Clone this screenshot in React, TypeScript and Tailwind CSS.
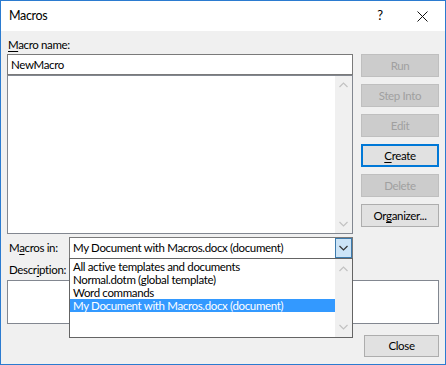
import React from "react";

const font = "font-['Lato',sans-serif] tracking-[-0.35px]";

function Btn({ label, disabled, primary }: { label: React.ReactNode; disabled?: boolean; primary?: boolean }) {
  const base = "h-[23px] w-full flex items-center justify-center text-[11.5px] leading-none";
  if (disabled)
    return <div className={`${base} bg-[#cccccc] border border-[#bfbfbf] text-[#a0a0a0]`}>{label}</div>;
  if (primary)
    return <div className={`${base} bg-[#e1e1e1] border-2 border-[#0078d7] text-black`}>{label}</div>;
  return <div className={`${base} bg-[#e1e1e1] border border-[#adadad] text-black`}>{label}</div>;
}

function Chevron({ up, className }: { up?: boolean; className?: string }) {
  return (
    <svg width="9" height="6" viewBox="0 0 9 6" className={className}>
      <path d={up ? "M0.5 5 L4.5 1 L8.5 5" : "M0.5 1 L4.5 5 L8.5 1"} fill="none" stroke="currentColor" strokeWidth="1.2" />
    </svg>
  );
}

export default function App() {
  return (
    <div className={`w-[446px] h-[365px] border border-[#2b7bd0] bg-[#f0f0f0] flex flex-col ${font} text-[11.5px] text-black`}>
      {/* Title bar */}
      <div className="h-[30px] bg-white flex items-center pl-[8px] shrink-0">
        <span className="flex-1 text-[12.5px]">Macros</span>
        <span className="w-[20px] text-center text-[13px] mr-[27px]">?</span>
        <svg width="11" height="11" viewBox="0 0 11 11" className="mr-[17px]">
          <path d="M0.5 0.5 L10.5 10.5 M10.5 0.5 L0.5 10.5" stroke="#111" strokeWidth="1" />
        </svg>
      </div>

      {/* Body */}
      <div className="flex flex-col px-[6px] pt-[6px] relative">
        <div className="h-[16px] leading-[16px] pl-[1px] mb-[1px]">
          <span className="underline underline-offset-2">M</span>acro name:
        </div>

        <div className="flex gap-[8px]">
          <div className="w-[346px] flex flex-col">
            <div className="h-[21px] bg-white border border-[#7a7a7a] flex items-center pl-[3px]">NewMacro</div>
            <div className="h-[159px] bg-white border border-[#828790] flex justify-end">
              <div className="w-[17px] bg-[#f0f0f0] flex flex-col items-center justify-between py-[6px] text-[#c2c2c2]">
                <Chevron up />
                <Chevron />
              </div>
            </div>
          </div>
          <div className="w-[78px] flex flex-col gap-[7px]">
            <Btn label="Run" disabled />
            <Btn label="Step Into" disabled />
            <Btn label="Edit" disabled />
            <Btn primary label={<><span className="underline underline-offset-2">C</span>reate</>} />
            <Btn label="Delete" disabled />
            <Btn label={<>Or<span className="underline underline-offset-2">g</span>anizer...</>} />
          </div>
        </div>

        {/* Macros in */}
        <div className="flex items-center mt-[3px] h-[22px]">
          <div className="w-[62px] pl-[2px]">
            M<span className="underline underline-offset-2">a</span>cros in:
          </div>
          <div className="w-[284px] h-[22px] bg-white border border-[#7a7a7a] flex items-center">
            <span className="flex-1 pl-[3px]">My Document with Macros.docx (document)</span>
            <div className="w-[17px] h-[20px] bg-[#cce4f7] border border-[#3d7bad] flex items-center justify-center text-[#333]">
              <Chevron />
            </div>
          </div>
        </div>

        <div className="h-[16px] leading-[16px] mt-[3px] pl-[2px]">
          Descr<span className="underline underline-offset-2">i</span>ption:
        </div>
        <div className="h-[44px] mt-[2px] w-[432px] bg-white border border-[#828790]" />

        <div className="flex justify-end mt-[11px]">
          <div className="w-[75px] h-[22px] bg-[#e1e1e1] border border-[#adadad] flex items-center justify-center">Close</div>
        </div>

        {/* Dropdown overlay */}
        <div className="absolute left-[68px] top-[227px] w-[284px] h-[80px] bg-white border border-[#646464] flex">
          <div className="flex-1 flex flex-col pt-[1px]">
            {[
              "All active templates and documents",
              "Normal.dotm (global template)",
              "Word commands",
              "My Document with Macros.docx (document)",
            ].map((t, i) => (
              <div
                key={t}
                className={`h-[13px] leading-[13px] pl-[3px] whitespace-nowrap ${i === 3 ? "bg-[#3399ff] text-white" : ""}`}
              >
                {t}
              </div>
            ))}
          </div>
          <div className="w-[17px] bg-[#f0f0f0] flex flex-col items-center justify-between py-[7px] text-[#c2c2c2]">
            <Chevron up />
            <Chevron />
          </div>
        </div>
      </div>
    </div>
  );
}
